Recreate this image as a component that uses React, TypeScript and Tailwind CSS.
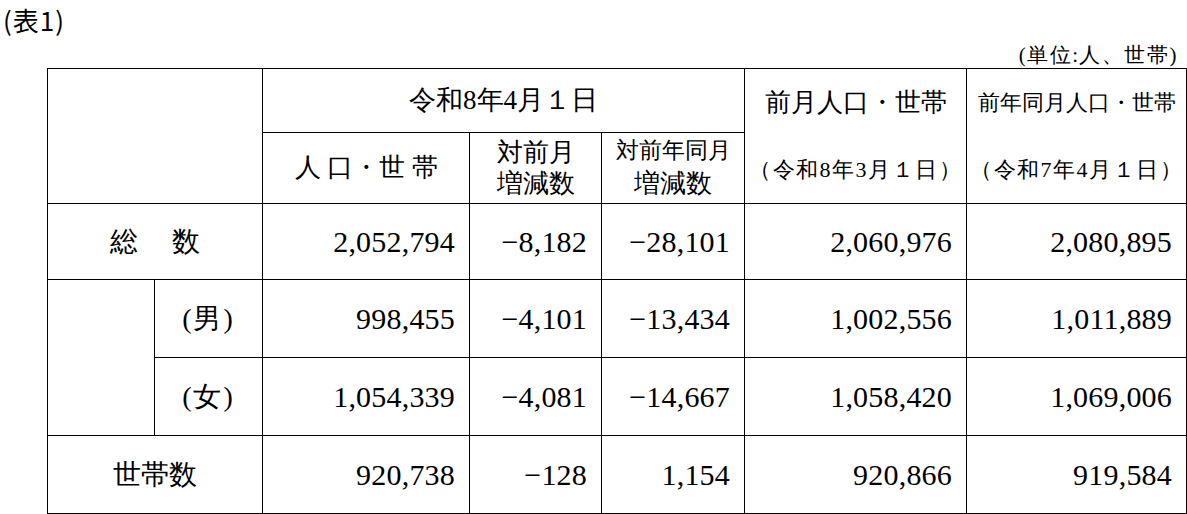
const rows = [
  { label: 'total', values: ['2,052,794', '−8,182', '−28,101', '2,060,976', '2,080,895'] },
  { label: 'male', values: ['998,455', '−4,101', '−13,434', '1,002,556', '1,011,889'] },
  { label: 'female', values: ['1,054,339', '−4,081', '−14,667', '1,058,420', '1,069,006'] },
  { label: 'households', values: ['920,738', '−128', '1,154', '920,866', '919,584'] },
];

function NumCells({ values }: { values: string[] }) {
  return (
    <>
      {values.map((v, i) => (
        <td
          key={i}
          className="p-0 pr-[14px] border border-black text-right text-[30px] tracking-[0.2px] leading-none font-['Liberation_Serif',serif]"
        >
          {v}
        </td>
      ))}
    </>
  );
}

export default function App() {
  return (
    <div className="w-[1187px] h-[514px] bg-white text-black overflow-hidden font-['Liberation_Serif',serif]">
      {/* title */}
      <div className="h-[44px] pl-[3px] leading-[40px] text-[26px] tracking-[1px] font-['Noto_Sans_CJK_JP',sans-serif]">
        (表1)
      </div>
      {/* unit */}
      <div className="h-[24px] pr-[9px] text-right text-[21px] tracking-[1.5px] leading-[22px]">
        (単位:人、世帯)
      </div>

      <table className="ml-[47px] w-[1139px] table-fixed border-collapse text-black font-['Liberation_Serif',serif]">
        <colgroup>
          <col className="w-[107px]" />
          <col className="w-[108px]" />
          <col className="w-[207px]" />
          <col className="w-[132px]" />
          <col className="w-[143px]" />
          <col className="w-[222px]" />
          <col className="w-[220px]" />
        </colgroup>
        <tbody>
          <tr>
            <td rowSpan={2} colSpan={2} className="p-0 border border-black" />
            <td colSpan={3} className="p-0 h-[64px] border border-black text-center text-[27px] leading-none">
              令和8年4月１日
            </td>
            <td rowSpan={2} className="p-0 border border-black text-center">
              <div className="flex flex-col">
                <div className="h-[67px] flex items-center justify-center text-[26px]">前月人口・世帯</div>
                <div className="h-[67px] flex items-center justify-center text-[22px] tracking-[1.5px]">（令和8年3月１日）</div>
              </div>
            </td>
            <td rowSpan={2} className="p-0 border border-black text-center">
              <div className="flex flex-col">
                <div className="h-[67px] flex items-center justify-center text-[22px]">前年同月人口・世帯</div>
                <div className="h-[67px] flex items-center justify-center text-[22px] tracking-[1.5px]">（令和7年4月１日）</div>
              </div>
            </td>
          </tr>
          <tr>
            <td className="p-0 h-[71px] border border-black text-center text-[26px] leading-none">
              人 口・世 帯
            </td>
            <td className="p-0 border border-black text-center text-[26px] leading-[31px]">
              対前月
              <br />
              増減数
            </td>
            <td className="p-0 border border-black text-center leading-[31px]">
              <span className="text-[23px]">対前年同月</span>
              <br />
              <span className="text-[26px]">増減数</span>
            </td>
          </tr>
          <tr>
            <td colSpan={2} className="p-0 h-[76px] border border-black text-[28px]">
              <div className="flex justify-center gap-[34px]">
                <span>総</span>
                <span>数</span>
              </div>
            </td>
            <NumCells values={rows[0].values} />
          </tr>
          <tr>
            <td rowSpan={2} className="p-0 border border-black" />
            <td className="p-0 h-[78px] border border-black text-center text-[28px] tracking-[2px]">(男)</td>
            <NumCells values={rows[1].values} />
          </tr>
          <tr>
            <td className="p-0 h-[78px] border border-black text-center text-[28px] tracking-[2px]">(女)</td>
            <NumCells values={rows[2].values} />
          </tr>
          <tr>
            <td colSpan={2} className="p-0 h-[78px] border border-black text-center text-[28px]">
              世帯数
            </td>
            <NumCells values={rows[3].values} />
          </tr>
        </tbody>
      </table>
    </div>
  );
}
